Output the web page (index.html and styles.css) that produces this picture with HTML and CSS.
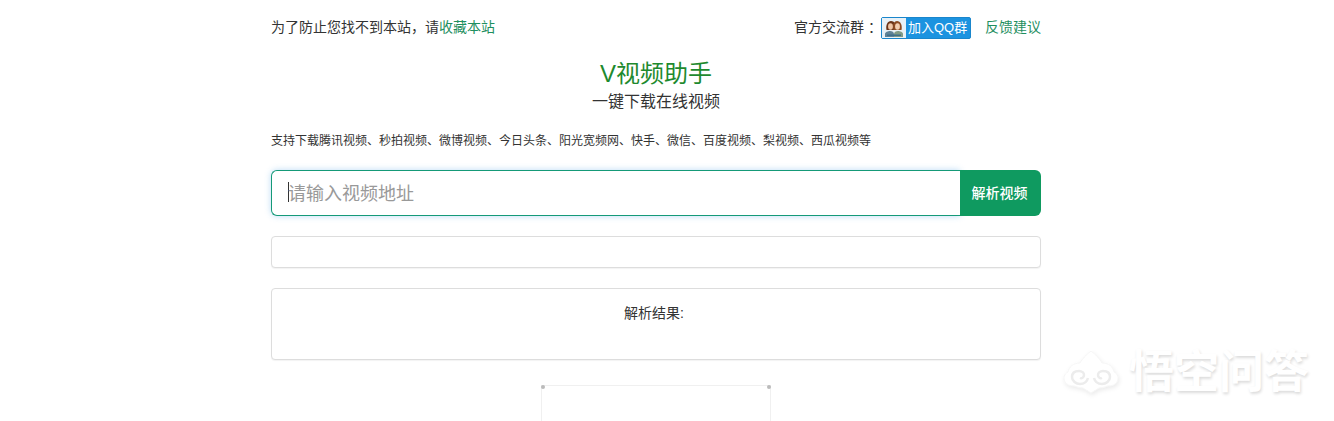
FILE: index.html
```html
<!DOCTYPE html>
<html lang="zh">
<head>
<meta charset="utf-8">
<title>V视频助手</title>
<link rel="stylesheet" href="styles.css">
</head>
<body>
<div class="page">
  <main class="wrap">
    <header class="top">
      <div>为了防止您找不到本站<span class="punct">，</span>请<a class="link" href="#">收藏本站</a></div>
      <div class="top-right">
        <span class="group-label">官方交流群<span class="punct colon">：</span></span>
        <a class="qq" href="#">
          <span class="qq-icon">
            <svg width="20" height="20" viewBox="0 0 20 20">
              <path d="M1 19v-3c0-2 3-3 5-3s4 1 4 3v3z" fill="#5f8296"/>
              <path d="M10 19v-3c0-2 2-3 4-3s5 1 5 3v3z" fill="#7f9a86"/>
              <path d="M2.500 12c-1-5 1-9 4.500-9s5 3 3.500 9z" fill="#6b3418"/>
              <path d="M9.500 12c-1.500-6 1-9 3.500-9 3.500 0 5.500 4 4.500 9z" fill="#8c4a22"/>
              <ellipse cx="6.500" cy="8.500" rx="2.400" ry="3.200" fill="#efc6a6"/>
              <ellipse cx="13.500" cy="8.500" rx="2.400" ry="3.200" fill="#f3cfb2"/>
              <rect x="3" y="16.500" width="14" height="1.500" fill="#3f6f8a"/>
            </svg>
          </span>
          <span class="qq-text">加入QQ群</span>
        </a>
        <a class="link feedback" href="#">反馈建议</a>
      </div>
    </header>

    <section class="head">
      <h1 class="title">V视频助手</h1>
      <p class="subtitle">一键下载在线视频</p>
    </section>

    <p class="support">支持下载腾讯视频、秒拍视频、微博视频、今日头条、阳光宽频网、快手、微信、百度视频、梨视频、西瓜视频等</p>

    <form class="search">
      <div class="field"><span class="caret"></span><span class="placeholder">请输入视频地址</span></div>
      <button class="btn" type="button">解析视频</button>
    </form>

    <div class="box box-empty"></div>
    <div class="box box-result">解析结果:</div>

    <div class="ad"><i class="dot dot-l"></i><i class="dot dot-r"></i></div>
  </main>
</div>

<div class="mark">
  <svg class="mark-logo" width="58" height="46" viewBox="0 0 58 46">
    <path d="M29 1c5 4 9 8 11 12 7 0 11 4 12 9 4 2 5 6 3 10-2 3-5 4-9 4-3 1-6 2-9 2l-8 5-8-5c-3 0-6-1-9-2-4 0-7-1-9-4-2-4-1-8 3-10 1-5 5-9 12-9 2-4 6-8 11-12z" fill="#fff" stroke="#f6f6f6"/>
    <path d="M26 28c-1 4-4 6-8 6s-8-3-8-7 3-6 7-6c3 0 5 2 5 4s-2 4-4 3M32 28c1 4 4 6 8 6s8-3 8-7-3-6-7-6c-3 0-5 2-5 4s2 4 4 3" fill="none" stroke="#ececec" stroke-width="2.500"/>
  </svg>
  <span class="mark-text">悟空问答</span>
</div>
</body>
</html>
```
FILE: styles.css
```css
* { box-sizing: border-box; }
html, body { margin: 0; padding: 0; height: 100%; overflow: hidden; background: #fff; }
body {
  font-family: "Liberation Sans", "Noto Sans CJK SC", sans-serif;
  font-size: 14px;
  color: #333;
  position: relative;
}
.page { padding-right: 22px; }
.wrap { width: 770px; margin: 0 auto; }
.link { color: #1f8f5f; text-decoration: none; }
.punct { font-family: "Noto Sans CJK TC", sans-serif; line-height: 0; }
.group-label { white-space: nowrap; flex: none; }
.colon { margin-left: 4px; margin-right: -4px; }

.top {
  height: 54px;
  display: flex;
  justify-content: space-between;
  align-items: flex-start;
  padding-top: 17px;
  line-height: 20px;
}
.top-right { display: flex; align-items: flex-start; }
.qq {
  width: 90px;
  height: 22px;
  margin-left: 3px;
  display: flex;
  align-items: center;
  background: #1c93e0;
  border: 1px solid #1a86cc;
  border-radius: 2px;
  color: #fff;
  text-decoration: none;
  font-size: 13px;
}
.qq-icon {
  width: 24px;
  height: 20px;
  background: #e8f1f7;
  display: flex;
  justify-content: center;
  flex: none;
}
.qq-text { margin-left: 2px; white-space: nowrap; }
.feedback { margin-left: 14px; }

.head { text-align: center; }
.title {
  margin: 2px 0 0;
  font-size: 24px;
  font-weight: 400;
  line-height: 35px;
  color: #1e8a2e;
}
.subtitle {
  margin: 0;
  font-size: 16px;
  line-height: 22px;
  color: #333;
}
.support {
  margin: 0;
  padding-top: 19px;
  font-size: 12px;
  line-height: 18px;
  color: #333;
  white-space: nowrap;
}

.search { display: flex; height: 46px; margin-top: 20px; }
.field {
  flex: 1;
  display: flex;
  align-items: center;
  padding: 0 0 2px 16px;
  background: #fff;
  border: 1px solid #159a78;
  border-right: 0;
  border-radius: 6px 0 0 6px;
  box-shadow: 0 0 6px rgba(102, 175, 233, .45);
}
.caret { width: 1px; height: 20px; margin-right: -1px; background: #333; }
.placeholder { font-size: 18px; color: #999; }
.btn {
  width: 81px;
  border: 0;
  padding: 0 2px 2px 0;
  background: #0f9a60;
  color: #fff;
  font: inherit;
  font-weight: 500;
  border-radius: 0 6px 6px 0;
}

.box {
  background: #fff;
  border: 1px solid #ddd;
  border-radius: 4px;
  box-shadow: 0 1px 1px rgba(0, 0, 0, .05);
}
.box-empty { height: 32px; margin-top: 20px; }
.box-result {
  height: 72px;
  margin-top: 20px;
  padding: 14px 4px 0 0;
  text-align: center;
  line-height: 20px;
}

.ad {
  position: relative;
  width: 230px;
  height: 36px;
  margin: 25px 0 0 270px;
  border: 1px solid #f0f0f0;
  border-bottom: 0;
}
.dot {
  position: absolute;
  top: -1px;
  width: 4px;
  height: 4px;
  border-radius: 50%;
  background: #bbb;
}
.dot-l { left: -1px; }
.dot-r { right: -1px; }

.mark {
  position: absolute;
  left: 1062px;
  top: 349px;
  display: flex;
  align-items: center;
  gap: 9px;
}
.mark-logo { filter: drop-shadow(1px 2px 2px rgba(0, 0, 0, .08)); }
.mark-text {
  font-size: 45px;
  font-weight: 700;
  line-height: 48px;
  color: #fff;
  white-space: nowrap;
  text-shadow: 1px 2px 3px rgba(0, 0, 0, .14);
}
```
